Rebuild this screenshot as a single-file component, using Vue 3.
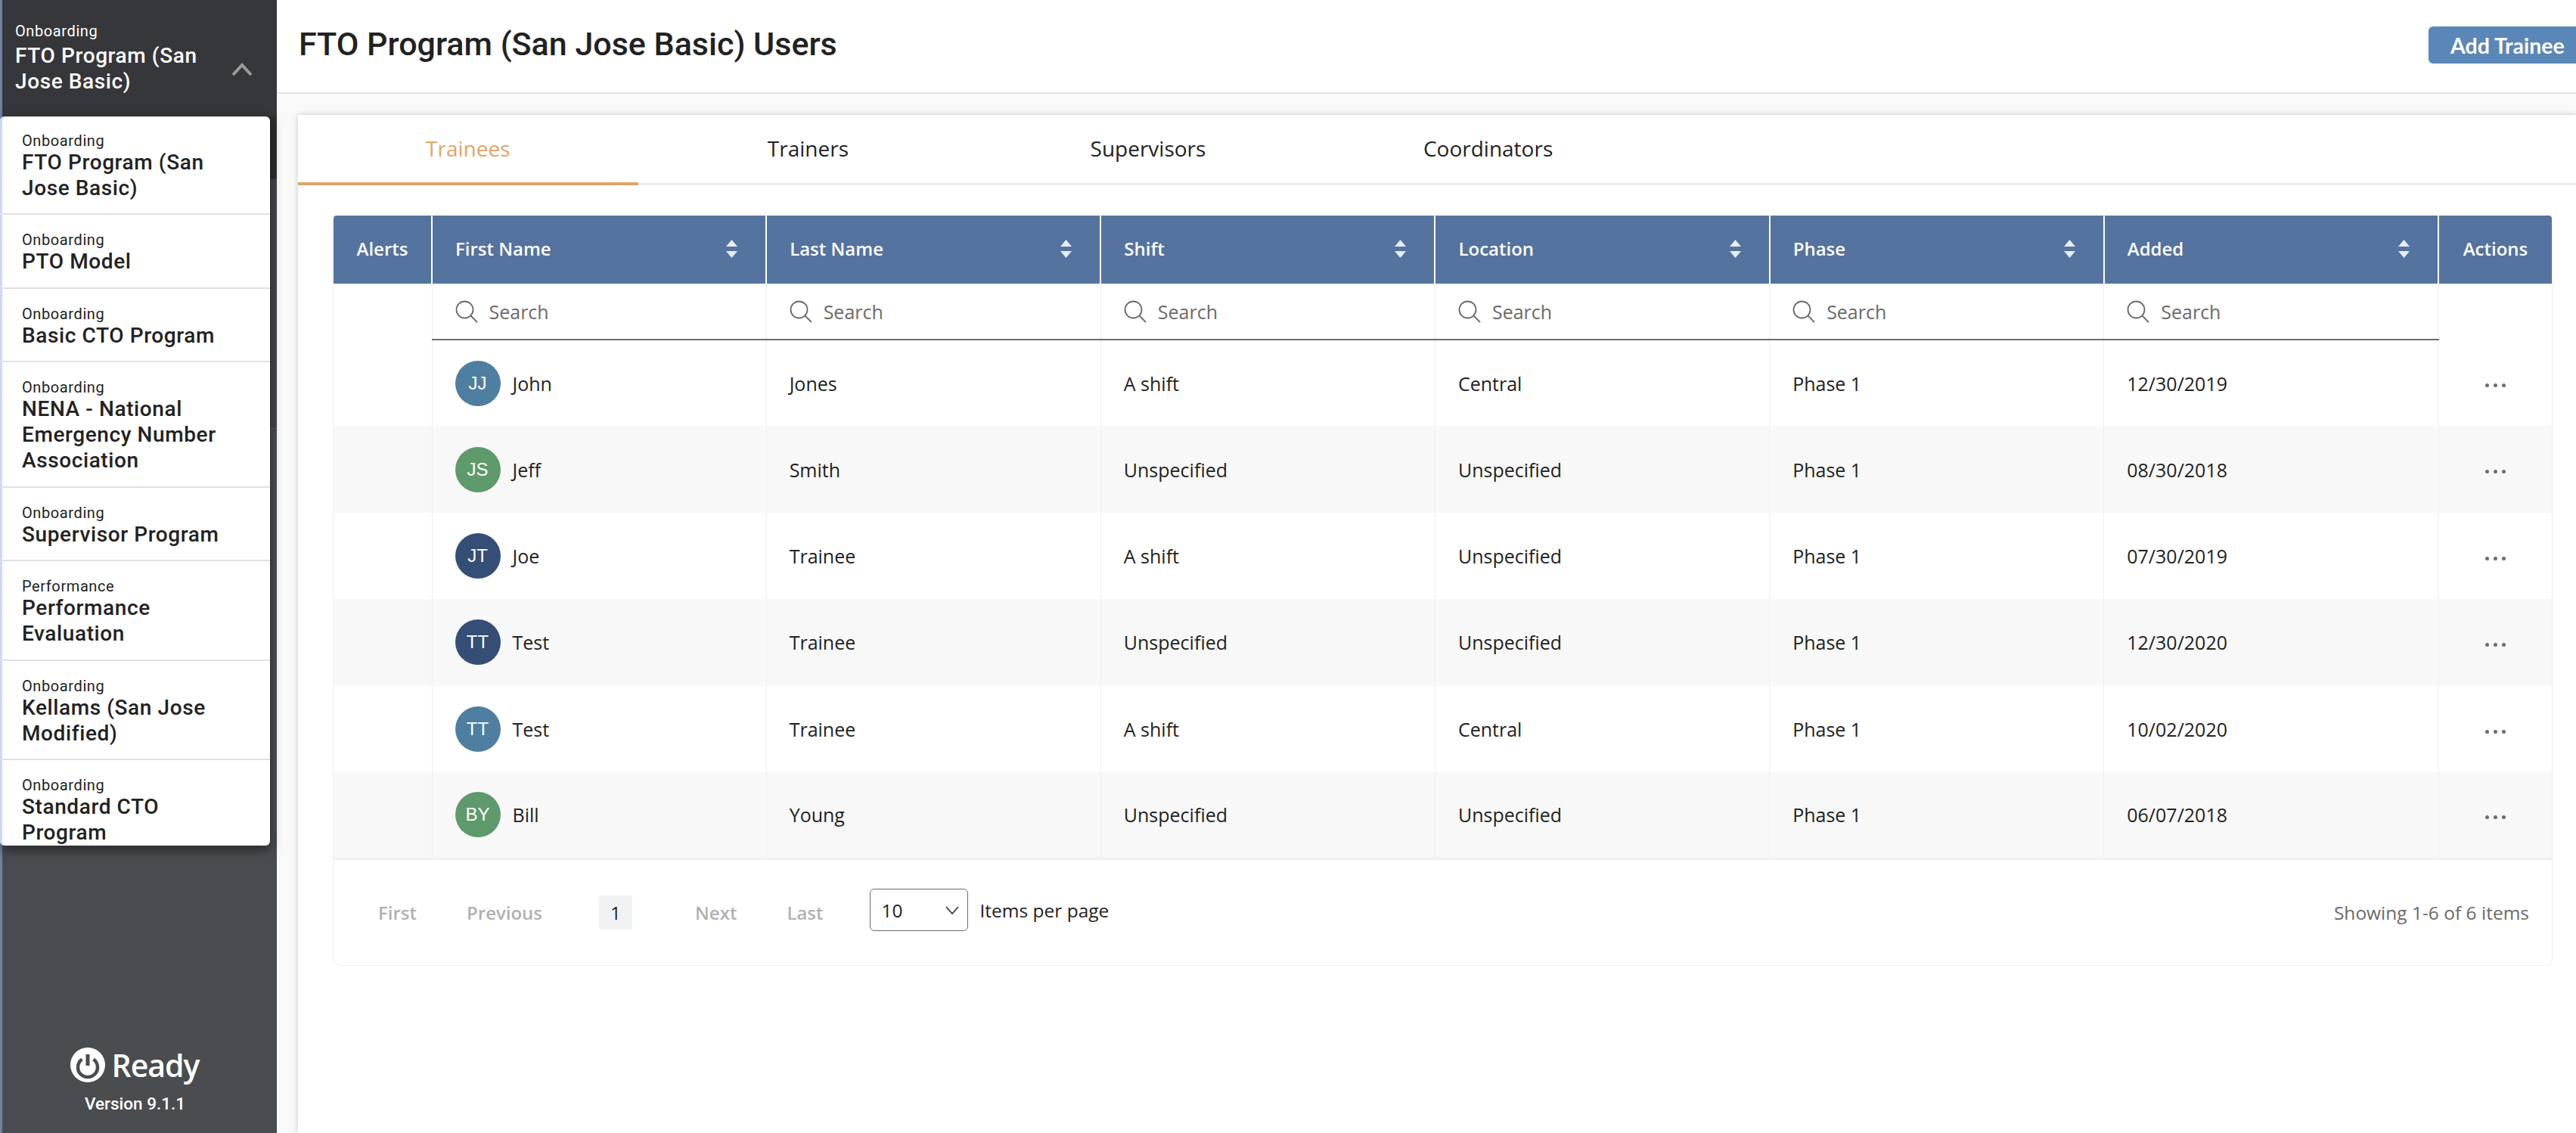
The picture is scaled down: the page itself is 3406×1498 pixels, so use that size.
<template>
  <div class="app">
    <aside class="sidebar">
      <div class="program-head">
        <div class="program-text">
          <div class="program-type">Onboarding</div>
          <div class="program-name">FTO Program (San Jose Basic)</div>
        </div>
        <svg class="chevron" viewBox="0 0 28 18" width="28" height="18">
          <path d="M2 16 L14 3 L26 16" fill="none" stroke="#9b9b9b" stroke-width="4" />
        </svg>
      </div>
      <div class="nav-dark"></div>
      <div class="nav-row"></div>

      <!-- Open program dropdown -->
      <div class="program-menu">
        <div v-for="item in programs" :key="item.name" class="menu-item">
          <div class="menu-type">{{ item.type }}</div>
          <div class="menu-name">{{ item.name }}</div>
        </div>
      </div>

      <div class="brand">
        <div class="logo">
          <svg viewBox="0 0 46 46" width="46" height="46">
            <circle cx="23" cy="23" r="23" fill="#fff" />
            <path d="M15.5 15.5 A13 13 0 1 0 30.5 15.5" fill="none" stroke="#4a4d50" stroke-width="4.5" />
            <path d="M23 9 V24" stroke="#4a4d50" stroke-width="5" />
          </svg>
          <span class="logo-text">Ready</span>
        </div>
        <div class="version">Version 9.1.1</div>
      </div>
    </aside>

    <main class="main">
      <header class="page-header">
        <h1>FTO Program (San Jose Basic) Users</h1>
        <button class="add-btn">Add Trainee</button>
      </header>

      <section class="card">
        <nav class="tabs">
          <div v-for="(tab, i) in tabs" :key="tab" class="tab" :class="{ active: i === 0 }">{{ tab }}</div>
        </nav>

        <div class="table-wrap">
          <table class="users">
            <colgroup>
              <col class="col-alerts" />
              <col v-for="c in columns" :key="c" class="col-data" />
              <col class="col-actions" />
            </colgroup>
            <thead>
              <tr class="head-row">
                <th class="center">Alerts</th>
                <th v-for="c in columns" :key="c">
                  <div class="th-inner">
                    <span>{{ c }}</span>
                    <svg class="sort" viewBox="0 0 15 24" width="15" height="24">
                      <path d="M7.5 0 L15 9 H0 Z" fill="#e9edf3" />
                      <path d="M0 15 H15 L7.5 24 Z" fill="#e9edf3" />
                    </svg>
                  </div>
                </th>
                <th class="center">Actions</th>
              </tr>
              <tr class="search-row">
                <td class="no-line"></td>
                <td v-for="c in columns" :key="c">
                  <div class="search">
                    <svg viewBox="0 0 30 30" width="30" height="30">
                      <circle cx="12.5" cy="12.5" r="11" fill="none" stroke="#6c6a68" stroke-width="1.8" />
                      <path d="M20.5 20.5 L29 29" stroke="#6c6a68" stroke-width="1.8" />
                    </svg>
                    <span>Search</span>
                  </div>
                </td>
                <td class="no-line"></td>
              </tr>
            </thead>
            <tbody>
              <tr v-for="u in users" :key="u.first + u.added" class="user-row">
                <td></td>
                <td>
                  <div class="person">
                    <span class="avatar" :class="u.color">{{ u.initials }}</span>
                    <span>{{ u.first }}</span>
                  </div>
                </td>
                <td>{{ u.last }}</td>
                <td>{{ u.shift }}</td>
                <td>{{ u.location }}</td>
                <td>{{ u.phase }}</td>
                <td>{{ u.added }}</td>
                <td class="center">
                  <span class="dots"><i></i><i></i><i></i></span>
                </td>
              </tr>
            </tbody>
          </table>

          <div class="pager">
            <span class="pg-link">First</span>
            <span class="pg-link">Previous</span>
            <span class="pg-current">1</span>
            <span class="pg-link">Next</span>
            <span class="pg-link">Last</span>
            <div class="per-page">
              <span>10</span>
              <svg viewBox="0 0 18 11" width="18" height="11">
                <path d="M1 1 L9 10 L17 1" fill="none" stroke="#3c3c3c" stroke-width="1.8" />
              </svg>
            </div>
            <span class="per-label">Items per page</span>
            <span class="showing">Showing 1-6 of 6 items</span>
          </div>
        </div>
      </section>
    </main>
  </div>
</template>

<script setup>
const programs = [
  { type: "Onboarding", name: "FTO Program (San Jose Basic)" },
  { type: "Onboarding", name: "PTO Model" },
  { type: "Onboarding", name: "Basic CTO Program" },
  { type: "Onboarding", name: "NENA - National Emergency Number Association" },
  { type: "Onboarding", name: "Supervisor Program" },
  { type: "Performance", name: "Performance Evaluation" },
  { type: "Onboarding", name: "Kellams (San Jose Modified)" },
  { type: "Onboarding", name: "Standard CTO Program" },
];

const tabs = ["Trainees", "Trainers", "Supervisors", "Coordinators"];

const columns = ["First Name", "Last Name", "Shift", "Location", "Phase", "Added"];

const users = [
  { initials: "JJ", color: "teal", first: "John", last: "Jones", shift: "A shift", location: "Central", phase: "Phase 1", added: "12/30/2019" },
  { initials: "JS", color: "green", first: "Jeff", last: "Smith", shift: "Unspecified", location: "Unspecified", phase: "Phase 1", added: "08/30/2018" },
  { initials: "JT", color: "navy", first: "Joe", last: "Trainee", shift: "A shift", location: "Unspecified", phase: "Phase 1", added: "07/30/2019" },
  { initials: "TT", color: "navy", first: "Test", last: "Trainee", shift: "Unspecified", location: "Unspecified", phase: "Phase 1", added: "12/30/2020" },
  { initials: "TT", color: "teal", first: "Test", last: "Trainee", shift: "A shift", location: "Central", phase: "Phase 1", added: "10/02/2020" },
  { initials: "BY", color: "green", first: "Bill", last: "Young", shift: "Unspecified", location: "Unspecified", phase: "Phase 1", added: "06/07/2018" },
];
</script>

<style scoped>
.app {
  display: flex;
  width: 3406px;
  height: 1498px;
  overflow: hidden;
  font-family: "Open Sans", "Lato", sans-serif;
  color: #222;
  background: #f9f9f9;
}

/* Sidebar */
.sidebar {
  position: relative;
  width: 366px;
  flex-shrink: 0;
  display: flex;
  flex-direction: column;
  background: #4a4d50;
  border-left: 3px solid #7081a8;
  box-sizing: border-box;
  font-family: "Roboto", sans-serif;
}

.program-head {
  height: 154px;
  box-sizing: border-box;
  padding: 29px 32px 0 17px;
  display: flex;
  justify-content: space-between;
  background: #36373a;
  color: #fff;
}

.program-text {
  width: 250px;
}

.program-type {
  font-size: 20px;
  line-height: 24px;
  letter-spacing: 0.6px;
  margin-bottom: 4px;
}

.program-name {
  font-size: 28px;
  line-height: 34px;
  font-weight: 500;
  letter-spacing: 0.6px;
}

.chevron {
  margin-top: 54px;
}

.nav-dark {
  height: 83px;
  background: #2e2f31;
}

.nav-row {
  height: 330px;
  background: #45474a;
  border-bottom: 1px solid #5c5e61;
  box-sizing: border-box;
}

.program-menu {
  position: absolute;
  left: -3px;
  top: 154px;
  width: 357px;
  height: 964px;
  overflow: hidden;
  box-sizing: border-box;
  background: #fff;
  border-radius: 6px;
  box-shadow: inset 3px 0 0 #cdd9f8, 0 6px 16px rgba(0, 0, 0, 0.5);
  color: #222;
}

.menu-item {
  padding: 21px 40px 16.5px 29px;
  border-bottom: 2px solid #e1e1e1;
}

.menu-item:first-child {
  padding-top: 19.5px;
}

.menu-type {
  font-size: 20px;
  line-height: 24px;
  letter-spacing: 0.6px;
}

.menu-name {
  font-size: 28px;
  line-height: 34px;
  font-weight: 500;
  letter-spacing: 0.6px;
}

.brand {
  margin-top: auto;
  padding: 0 12px 26px 0;
  display: flex;
  flex-direction: column;
  align-items: center;
  color: #fff;
}

.logo {
  display: flex;
  align-items: center;
  gap: 8px;
}

.logo-text {
  font-family: "Open Sans", sans-serif;
  font-weight: 600;
  font-size: 41px;
  line-height: 52px;
  letter-spacing: -1px;
}

.version {
  margin-top: 12px;
  font-size: 22.5px;
  line-height: 26px;
  font-weight: 500;
}

/* Main */
.main {
  flex: 1;
  min-width: 0;
  overflow: hidden;
  display: flex;
  flex-direction: column;
}

.page-header {
  height: 124px;
  flex-shrink: 0;
  box-sizing: border-box;
  padding: 34px 0 0 29px;
  display: flex;
  justify-content: space-between;
  align-items: flex-start;
  background: #fff;
  border-bottom: 2px solid #e4e4e4;
}

.page-header h1 {
  margin: 0;
  font-family: "Roboto", sans-serif;
  font-weight: 500;
  font-size: 43px;
  line-height: 48px;
  color: #222;
}

.add-btn {
  flex-shrink: 0;
  width: 210px;
  height: 49px;
  margin: 1px -15px 0 0;
  padding: 0 0 0 29px;
  text-align: left;
  border: none;
  border-radius: 6px 0 0 6px;
  background: #5a87b7;
  color: #fff;
  font-family: "Lato", sans-serif;
  font-weight: 700;
  font-size: 28.5px;
}

.card {
  flex: 1;
  margin: 28px 0 0 28px;
  background: #fff;
  box-shadow: 0 0 8px rgba(0, 0, 0, 0.2);
}

.tabs {
  display: flex;
  height: 93px;
  box-sizing: border-box;
  border-bottom: 3px solid #eeeeee;
}

.tab {
  width: 449.6px;
  height: 93px;
  box-sizing: border-box;
  padding-top: 24px;
  text-align: center;
  font-size: 28px;
  line-height: 40px;
  color: #222;
}

.tab.active {
  color: #dfa566;
  border-bottom: 4px solid #dfa566;
}

.table-wrap {
  width: 2935px;
  margin: 40px 0 0 46px;
  box-sizing: border-box;
  border: 1px solid #efefef;
  border-top: none;
  border-radius: 8px 8px 10px 10px;
}

.users {
  width: 100%;
  table-layout: fixed;
  border-collapse: collapse;
  font-size: 25px;
}

.col-alerts {
  width: 130px;
}

.col-actions {
  width: 150px;
}

.head-row th {
  height: 90px;
  padding: 0 30px 3px;
  box-sizing: border-box;
  text-align: left;
  font-size: 24px;
  font-weight: 600;
  color: #fff;
  background: #54739f;
  border-left: 2px solid #fff;
}

.head-row th:first-child {
  border-left: none;
  border-top-left-radius: 4px;
}

.head-row th:last-child {
  border-top-right-radius: 4px;
}

.users .center {
  padding: 0 0 3px;
  text-align: center;
}

.users td.center {
  padding: 0;
}

.th-inner {
  display: flex;
  justify-content: space-between;
  align-items: center;
}

.sort {
  margin-right: 7px;
}

.search-row td {
  height: 74px;
  padding: 0 30px;
  box-sizing: border-box;
  border-left: 1px solid #f0f0f0;
  border-bottom: 2px solid #6d6d6d;
}

.search-row td.no-line {
  border-bottom: none;
  padding: 0;
}

.search-row td:first-child {
  border-left: none;
}

.search {
  display: flex;
  align-items: center;
  gap: 15px;
  font-size: 25px;
  color: #6c6a68;
}

.user-row td {
  height: 114.4px;
  padding: 0 30px;
  box-sizing: border-box;
  border-left: 1px solid #f0f0f0;
}

.user-row td:first-child {
  border-left: none;
}

.user-row:nth-child(even) {
  background: #f8f8f8;
}

.user-row:last-child td {
  border-bottom: 3px solid #f0f0f0;
}

.person {
  display: flex;
  align-items: center;
  gap: 16px;
}

.avatar {
  width: 60px;
  height: 60px;
  border-radius: 50%;
  display: flex;
  align-items: center;
  justify-content: center;
  color: #fff;
  font-family: "Liberation Sans", sans-serif;
  font-size: 24px;
}

.avatar.teal {
  background: #4f7fa0;
}

.avatar.green {
  background: #5f9a6c;
}

.avatar.navy {
  background: #344e75;
}

.dots {
  display: inline-flex;
  gap: 6px;
  vertical-align: middle;
}

.dots i {
  width: 5px;
  height: 5px;
  border-radius: 50%;
  background: #6d6d6d;
}

.pager {
  height: 139px;
  box-sizing: border-box;
  padding-left: 26px;
  padding-right: 30px;
  display: flex;
  align-items: center;
  font-size: 24.5px;
}

.pg-link {
  padding: 0 33px;
  color: #b1b1b1;
  font-size: 24px;
  font-weight: 600;
}

.pg-current {
  width: 44px;
  height: 45px;
  margin: 0 50px 0 42px;
  display: flex;
  align-items: center;
  justify-content: center;
  background: #f1f2f3;
  border-radius: 3px;
}

.per-page {
  width: 130px;
  height: 56px;
  margin: -6px 0 0 28px;
  padding: 0 11px 0 15px;
  box-sizing: border-box;
  display: flex;
  align-items: center;
  justify-content: space-between;
  border: 1px solid #6d6d6d;
  border-radius: 6px;
}

.per-label {
  margin: -6px 0 0 16px;
}

.showing {
  margin-left: auto;
  color: #6c6a68;
}
</style>
